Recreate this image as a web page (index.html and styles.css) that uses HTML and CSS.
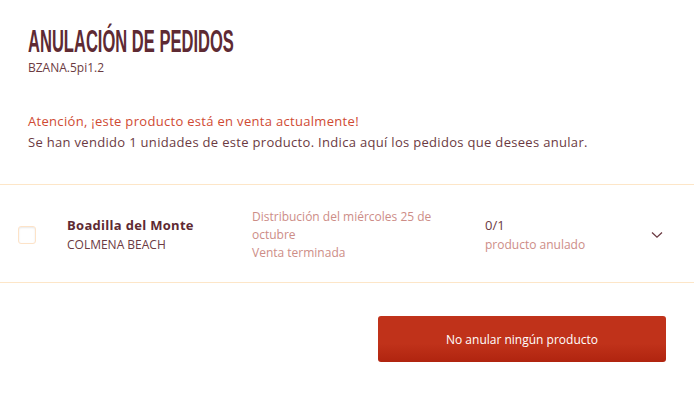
FILE: index.html
```html
<!DOCTYPE html>
<html lang="es">
<head>
    <meta charset="UTF-8">
    <title>Anulación de pedidos</title>
    <link rel="stylesheet" href="styles.css">
</head>
<body>
    <div class="header">
        <h1 class="title">ANULACIÓN DE PEDIDOS</h1>
        <div class="code">BZANA.5pi1.2</div>
    </div>

    <div class="notice">
        <div class="warning">Atención, ¡este producto está en venta actualmente!</div>
        <div>Se han vendido 1 unidades de este producto. Indica aquí los pedidos que desees anular.</div>
    </div>

    <div class="row">
        <span class="check"></span>
        <div class="place">
            <strong>Boadilla del Monte</strong>
            <span>COLMENA BEACH</span>
        </div>
        <div class="dist">Distribución del miércoles 25 de octubre<br>Venta terminada</div>
        <div class="count">
            <span>0/1</span>
            <span class="muted">producto anulado</span>
        </div>
        <svg class="chevron" width="12" height="8" viewBox="0 0 12 8">
            <path d="M1 1.5 L6 6.2 L11 1.5" fill="none" stroke="#6b3a42" stroke-width="1.3"/>
        </svg>
    </div>

    <div class="actions">
        <button class="btn">No anular ningún producto</button>
    </div>
</body>
</html>
```

FILE: styles.css
```css
body { font-family: "Open Sans", sans-serif; font-size: 12px; line-height: 18px; color: #6b3a42; margin: 0; padding: 0; background: #fff; }
.header { padding: 23px 28px 0; }
.title { font-family: "Liberation Sans", sans-serif; font-size: 32px; line-height: 37px; font-weight: 700; color: #5e2a33; margin: 0; white-space: nowrap; transform: scaleX(0.517); transform-origin: left center; }
.code { font-size: 12px; line-height: 16px; margin-top: 0; }
.notice { padding: 0 28px; margin-top: 35px; font-size: 13px; line-height: 21px; letter-spacing: 0.31px; }
.warning { color: #cf4a33; }
.row { display: flex; align-items: center; height: 95px; padding-top: 2px; margin-top: 31px; border-top: 1px solid #fde6c8; border-bottom: 1px solid #fde6c8; }
.check { width: 16px; height: 16px; margin-left: 18px; border: 1px solid #fde3c8; border-radius: 3px; box-shadow: inset 0 1px 2px #e8e8e8; flex: none; }
.place { display: flex; flex-direction: column; width: 185px; margin-left: 31px; line-height: 19px; flex: none; }
.place strong { font-size: 13px; letter-spacing: 0.3px; color: #5e2a33; }
.dist { width: 233px; padding-right: 50px; box-sizing: border-box; color: #cd8d87; line-height: 18px; flex: none; }
.count { display: flex; flex-direction: column; line-height: 19px; flex: none; font-size: 12px; }
.count span:first-child { font-size: 13px; }
.muted { color: #cd8d87; }
.chevron { margin-left: 66px; flex: none; }
.actions { display: flex; justify-content: flex-end; padding: 33px 28px 0; }
.btn { width: 288px; height: 46px; border: 0; border-radius: 3px; background: linear-gradient(#c0321a 60%, #b0240f); color: #fff; font-family: "Open Sans", sans-serif; font-size: 12px; }
```
